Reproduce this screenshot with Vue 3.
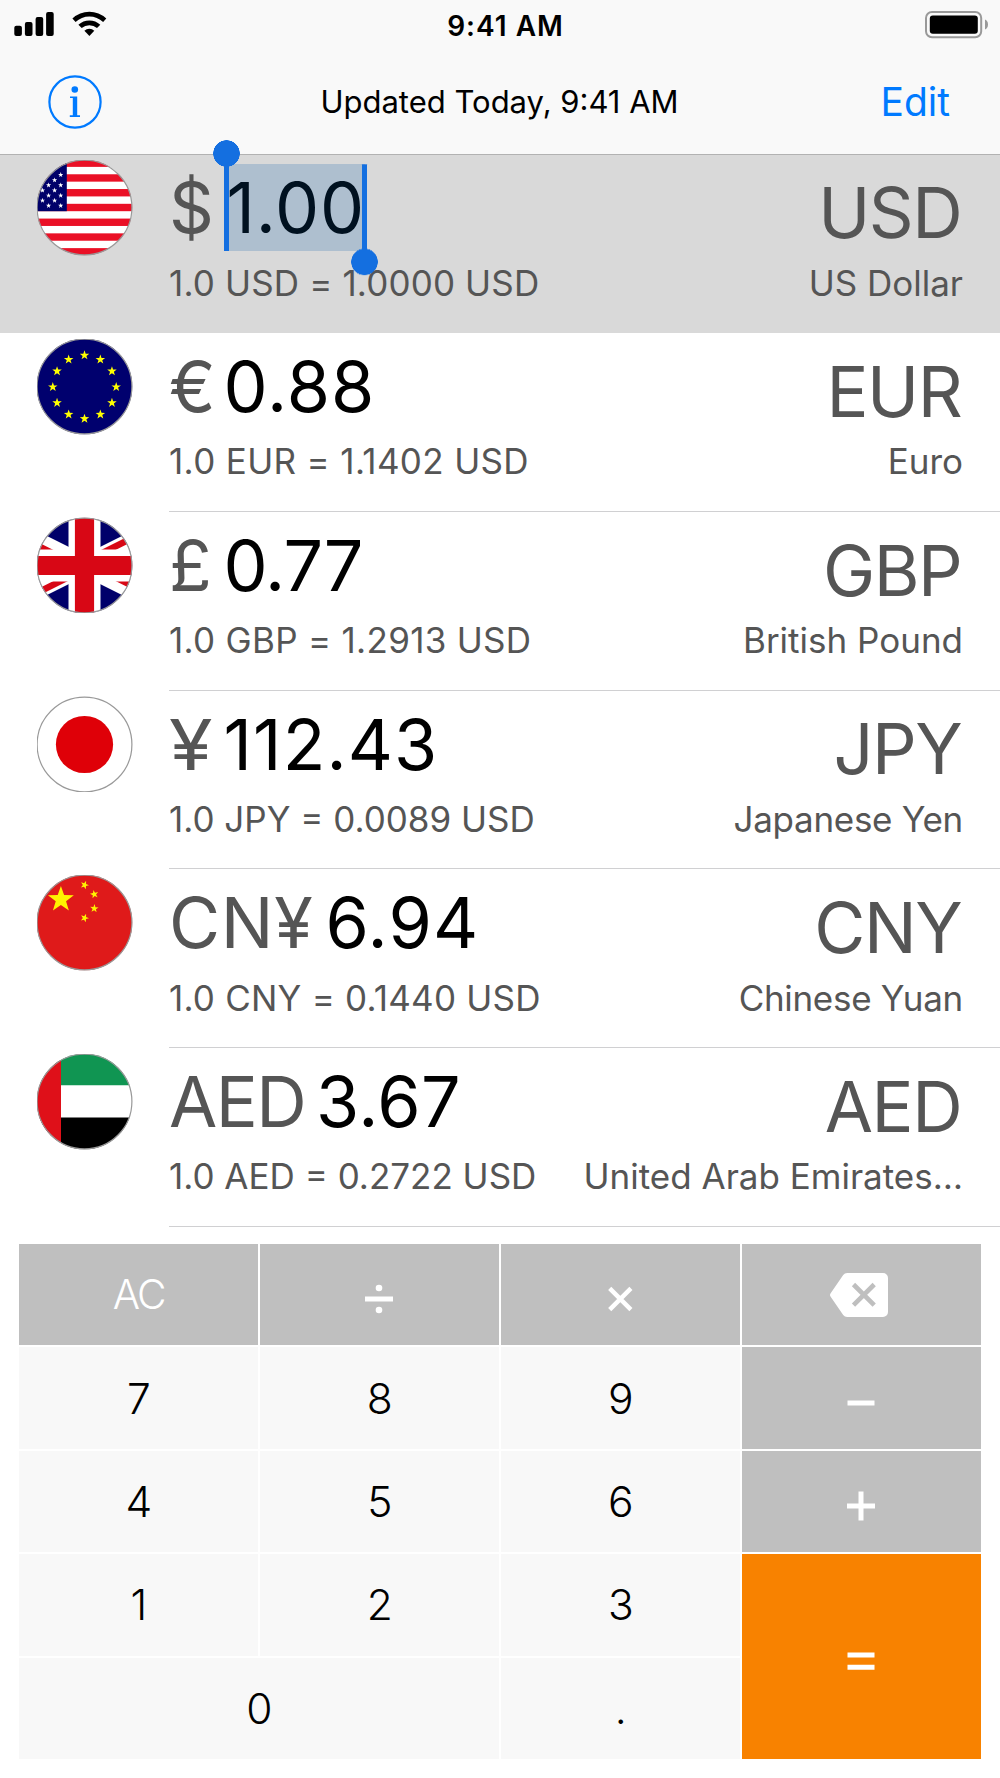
<script setup>
const currencies = [
  { code: 'USD', symbol: '$', amount: '1.00', rate: '1.0000', name: 'US Dollar', active: true },
  { code: 'EUR', symbol: '€', amount: '0.88', rate: '1.1402', name: 'Euro' },
  { code: 'GBP', symbol: '£', amount: '0.77', rate: '1.2913', name: 'British Pound' },
  { code: 'JPY', symbol: '¥', amount: '112.43', rate: '0.0089', name: 'Japanese Yen' },
  { code: 'CNY', symbol: 'CN¥', amount: '6.94', rate: '0.1440', name: 'Chinese Yuan' },
  { code: 'AED', symbol: 'AED', amount: '3.67', rate: '0.2722', name: 'United Arab Emirates…' },
]

const keys = [
  { id: 'AC', tone: 'fn' },
  { id: 'divide', tone: 'fn', icon: true },
  { id: 'times', tone: 'fn', icon: true },
  { id: 'delete', tone: 'fn', icon: true },
  { id: '7' },
  { id: '8' },
  { id: '9' },
  { id: 'minus', tone: 'fn', icon: true },
  { id: '4' },
  { id: '5' },
  { id: '6' },
  { id: 'plus', tone: 'fn', icon: true },
  { id: '1' },
  { id: '2' },
  { id: '3' },
  { id: 'equals', tone: 'equals', icon: true },
  { id: '0', tone: 'zero' },
  { id: '.' },
]

// five-pointed star as a polygon points string
function star(cx, cy, r, turn = 0) {
  const points = []
  for (let i = 0; i < 10; i++) {
    const radius = i % 2 ? r * 0.4 : r
    const angle = ((i * 36 - 90 + turn) * Math.PI) / 180
    points.push(`${(cx + radius * Math.cos(angle)).toFixed(2)},${(cy + radius * Math.sin(angle)).toFixed(2)}`)
  }
  return points.join(' ')
}

const usStars = [
  [24.2, 15.3], [18.1, 20.6], [12.1, 25.7], [24.2, 25.7], [6, 30.8], [18.1, 30.8],
  [12.1, 36], [24.2, 36], [6, 41], [18.1, 41], [12.1, 46.2], [24.2, 46.2],
].map(([x, y]) => star(x, y, 2.7))

const euStars = Array.from({ length: 12 }, (_, i) => {
  const angle = (i * Math.PI) / 6
  return star(48 + 31.7 * Math.sin(angle), 48.5 - 31.7 * Math.cos(angle), 5)
})

const cnStars = [
  star(24.4, 25, 13.6),
  star(48.1, 10.5, 4.4, 20),
  star(57.8, 19.8, 4.4, -12),
  star(57.8, 34, 4.4, 4),
  star(48.1, 43.5, 4.4, 20),
]
</script>

<template>
  <div class="screen">
    <header class="header">
      <div class="status-bar">
        <svg class="signal" width="93" height="26" viewBox="0 0 93 26">
          <rect x="0.3" y="14.7" width="7.6" height="10.3" rx="2" />
          <rect x="10.9" y="11" width="7.6" height="14" rx="2" />
          <rect x="21.6" y="6" width="7.6" height="19" rx="2" />
          <rect x="32.1" y="1" width="7.6" height="24" rx="2" />
          <path d="M58.4 7.6a24.7 24.7 0 0 1 33.9 0l-3.2 3.5a20 20 0 0 0-27.5 0z" />
          <path d="M64.4 13.7a16.2 16.2 0 0 1 21.9 0l-3.3 3.4a11.5 11.5 0 0 0-15.3 0z" />
          <path d="M70.4 19.7a7.5 7.5 0 0 1 9.9 0L75.4 25z" />
        </svg>
        <span class="clock">9:41 AM</span>
        <svg class="battery" width="64" height="28" viewBox="0 0 64 28">
          <rect class="battery-case" x="1" y="1" width="55.2" height="25.2" rx="6" />
          <rect x="4.8" y="4.5" width="48" height="18.2" rx="3" />
          <path class="battery-nub" d="M60 8.5q3 1.4 3 5t-3 5z" />
        </svg>
      </div>
      <nav class="nav-bar">
        <svg class="info" width="54" height="54" viewBox="0 0 54 54">
          <circle class="info-ring" cx="27" cy="27" r="25.6" />
          <circle cx="26.8" cy="14.5" r="3.3" />
          <path d="M22 21.4h7.2v18.9h2.8v1.6H21.8v-1.6h3V23H22z" />
        </svg>
        <span class="updated">Updated Today, 9:41 AM</span>
        <span class="edit">Edit</span>
      </nav>
    </header>

    <main class="list">
      <div
        v-for="c in currencies"
        :key="c.code"
        class="row"
        :class="[c.code.toLowerCase(), { active: c.active, wide: c.symbol.length > 1 }]"
      >
        <svg class="flag" width="96" height="96" viewBox="0 0 96 96">
          <defs>
            <clipPath :id="`disc-${c.code}`"><circle cx="48" cy="48" r="47.8" /></clipPath>
          </defs>
          <g :clip-path="`url(#disc-${c.code})`">
            <template v-if="c.code === 'USD'">
              <rect width="96" height="96" fill="#fff" />
              <rect v-for="n in 7" :key="n" :y="(n - 1) * 14.77" width="96" height="7.38" fill="#ea1026" />
              <rect width="30.3" height="51.7" fill="#00006a" />
              <polygon v-for="(points, i) in usStars" :key="i" :points="points" fill="#fff" />
            </template>
            <template v-else-if="c.code === 'EUR'">
              <rect width="96" height="96" fill="#00006e" />
              <polygon v-for="(points, i) in euStars" :key="i" :points="points" fill="#ff0" />
            </template>
            <svg v-else-if="c.code === 'GBP'" width="96" height="96" viewBox="15 0 30 30">
              <clipPath id="saltire"><path d="M30 15h30v15zv15H0zH0V0zV0h30z" /></clipPath>
              <rect width="60" height="30" fill="#00006a" />
              <path d="M0 0l60 30M60 0L0 30" stroke="#fff" stroke-width="6" />
              <path d="M0 0l60 30M60 0L0 30" stroke="#d80715" stroke-width="4" clip-path="url(#saltire)" />
              <path d="M30 0v30M0 15h60" stroke="#fff" stroke-width="10" />
              <path d="M30 0v30M0 15h60" stroke="#d80715" stroke-width="6" />
            </svg>
            <template v-else-if="c.code === 'JPY'">
              <rect width="96" height="96" fill="#fff" />
              <circle cx="48" cy="48" r="28.6" fill="#df0008" />
            </template>
            <template v-else-if="c.code === 'CNY'">
              <rect width="96" height="96" fill="#df1a1a" />
              <polygon v-for="(points, i) in cnStars" :key="i" :points="points" fill="#fff200" />
            </template>
            <template v-else>
              <rect width="96" height="32" fill="#109552" />
              <rect y="32" width="96" height="32" fill="#fff" />
              <rect y="64" width="96" height="32" fill="#000" />
              <rect width="24.5" height="96" fill="#df1019" />
            </template>
          </g>
          <circle class="flag-ring" cx="48" cy="48" r="47.4" />
        </svg>
        <div class="body">
          <div class="value">
            <div class="amount-line">
              <span class="symbol">{{ c.symbol }}</span>
              <span class="amount">{{ c.amount }}</span>
            </div>
            <div class="rate">1.0 {{ c.code }} = {{ c.rate }} USD</div>
          </div>
          <div class="currency">
            <div class="code">{{ c.code }}</div>
            <div class="name">{{ c.name }}</div>
          </div>
        </div>
      </div>
    </main>

    <section class="keypad">
      <button v-for="k in keys" :key="k.id" class="key" :class="k.tone">
        <svg v-if="k.id === 'delete'" class="delete" width="58" height="44" viewBox="0 0 58 44">
          <path fill="#fff" d="M17.2 0H53a5 5 0 0 1 5 5v34a5 5 0 0 1-5 5H17.2a5 5 0 0 1-4-2.1L.5 23.4a2.4 2.4 0 0 1 0-2.8L13.2 2.1a5 5 0 0 1 4-2.1z" />
          <path stroke="#bfbfbf" stroke-width="4.6" d="M23.5 11.5l20.7 20.7M44.2 11.5L23.5 32.2" />
        </svg>
        <svg v-else-if="k.icon" class="operator" width="30" height="30" viewBox="0 0 30 30">
          <template v-if="k.id === 'divide'">
            <path d="M1 15h28" />
            <circle cx="15" cy="4" r="3.3" />
            <circle cx="15" cy="26" r="3.3" />
          </template>
          <path v-else-if="k.id === 'times'" class="thin" d="M4.7 4.4l21.2 21.2M25.9 4.4L4.7 25.6" />
          <path v-else-if="k.id === 'minus'" d="M1.5 15h27" />
          <path v-else-if="k.id === 'plus'" d="M1 15h28M15 0.5v29" />
          <path v-else d="M1.5 8.9h27M1.5 21.2h27" />
        </svg>
        <span v-else class="label">{{ k.id }}</span>
      </button>
    </section>
  </div>
</template>

<style>
body {
  margin: 0;
  background: #fff;
}
</style>

<style scoped>
.screen {
  width: 1000px;
  height: 1778px;
  overflow: hidden;
  background: #fff;
  color: #000;
  font-family: Inter, 'Liberation Sans', sans-serif;
}

.header {
  height: 154.3px;
  background: #f9f9f9;
}

.status-bar {
  display: grid;
  grid-template-columns: 1fr auto 1fr;
  align-items: center;
  height: 51px;
  padding: 0 11px 0 14px;
  box-sizing: border-box;
}

.signal {
  margin-bottom: 3px;
}

.battery {
  justify-self: end;
  margin-bottom: 2px;
}

.battery-case {
  fill: none;
  stroke: #999;
  stroke-width: 2;
}

.battery-nub {
  fill: #999;
}

.clock {
  padding-left: 8px;
  font-size: 28px;
  font-weight: 600;
  letter-spacing: 1px;
}

.nav-bar {
  display: grid;
  grid-template-columns: 1fr auto 1fr;
  align-items: center;
  height: 101px;
  padding: 0 50px 0 49px;
}

.info {
  margin-left: -1px;
  fill: #007aff;
}

.info-ring {
  fill: none;
  stroke: #007aff;
  stroke-width: 2.2;
}

.updated {
  font-size: 31px;
}

.edit {
  justify-self: end;
  color: #007aff;
  font-size: 39px;
}

.row {
  display: flex;
  height: 178.75px;
}

.row.active {
  box-sizing: border-box;
  border-top: 1px solid #b2b2b2;
  background: #d9d9d9;
}

.row.active .flag,
.row.active .body {
  margin-top: -1px;
}

.flag {
  flex: none;
  padding: 5.5px 36.5px 0;
}

.flag-ring {
  fill: none;
  stroke: #999;
  stroke-width: 1.2;
}

.body {
  display: flex;
  flex: 1;
  justify-content: space-between;
  height: 178.75px;
  padding-right: 37px;
  box-sizing: border-box;
  border-bottom: 1px solid #d0d0d2;
  color: #555;
  white-space: nowrap;
}

.row.active .body {
  border-color: transparent;
}

.value {
  padding-top: 10px;
}

.amount-line {
  display: flex;
  height: 87px;
  line-height: 87px;
  font-size: 70px;
}

.symbol {
  width: 54.5px;
}

.wide .symbol {
  width: auto;
  margin-right: 12px;
}

.jpy .symbol {
  transform: scaleX(1.13);
  transform-origin: left;
}

.cny .symbol {
  letter-spacing: 0.7px;
}

.aed .symbol {
  margin-right: 11px;
  letter-spacing: -1.6px;
}

.amount {
  color: #000;
  letter-spacing: 1.1px;
}

.gbp .amount {
  letter-spacing: -0.8px;
}

.aed .amount {
  letter-spacing: 0.5px;
}

.row.active .amount {
  position: relative;
  margin-left: 3px;
  background: #aebfcf;
  color: #001120;
  letter-spacing: 0.8px;
}

.row.active .amount::before,
.row.active .amount::after {
  content: '';
  position: absolute;
  width: 27px;
  height: 111.4px;
  background:
    radial-gradient(circle at 50% 13.5px, #146fe0 13px, transparent 13.5px),
    linear-gradient(#146fe0, #146fe0) 50% 100% / 5px 98px no-repeat;
}

.row.active .amount::before {
  top: -24.4px;
  left: -13.5px;
}

.row.active .amount::after {
  top: 0;
  right: -13px;
  transform: rotate(180deg);
}

.rate,
.name {
  height: 40px;
  line-height: 40px;
  font-size: 35px;
}

.rate {
  margin-top: 11.4px;
}

.usd .rate {
  letter-spacing: 0.15px;
}

.eur .rate {
  letter-spacing: 0.35px;
}

.gbp .rate {
  letter-spacing: 0.3px;
}

.cny .rate {
  letter-spacing: 0.22px;
}

.currency {
  padding-top: 14.8px;
  text-align: right;
}

.code {
  height: 87px;
  padding-right: 1.8px;
  line-height: 87px;
  font-size: 70px;
  letter-spacing: -1.5px;
}

.name {
  margin-top: 6.6px;
}

.jpy .name,
.cny .name {
  letter-spacing: -0.3px;
}

.keypad {
  display: grid;
  grid-template-columns: repeat(4, 1fr);
  grid-template-rows: repeat(5, 1fr);
  gap: 2.4px;
  width: 961.7px;
  height: 515px;
  margin: 17.2px 0 0 19px;
}

.key {
  display: flex;
  align-items: center;
  justify-content: center;
  padding: 0;
  border: 0;
  background: #f8f8f8;
  color: #000;
  font-family: inherit;
  font-size: 42.5px;
  font-weight: 300;
}

.key.fn {
  background: #bfbfbf;
  color: #fff;
  font-size: 40.5px;
  font-weight: 350;
  letter-spacing: -1.8px;
}

.key.equals {
  grid-row: span 2;
  background: #f88200;
}

.key.zero {
  grid-column: span 2;
}

.label {
  padding-left: 1px;
}

.operator {
  margin-top: 9px;
  overflow: visible;
  fill: #fff;
  stroke: #fff;
  stroke-width: 5;
}

.operator circle {
  stroke: none;
}

.operator .thin {
  stroke-width: 4.4;
}

.delete {
  margin-right: 5px;
  fill: none;
}
</style>
